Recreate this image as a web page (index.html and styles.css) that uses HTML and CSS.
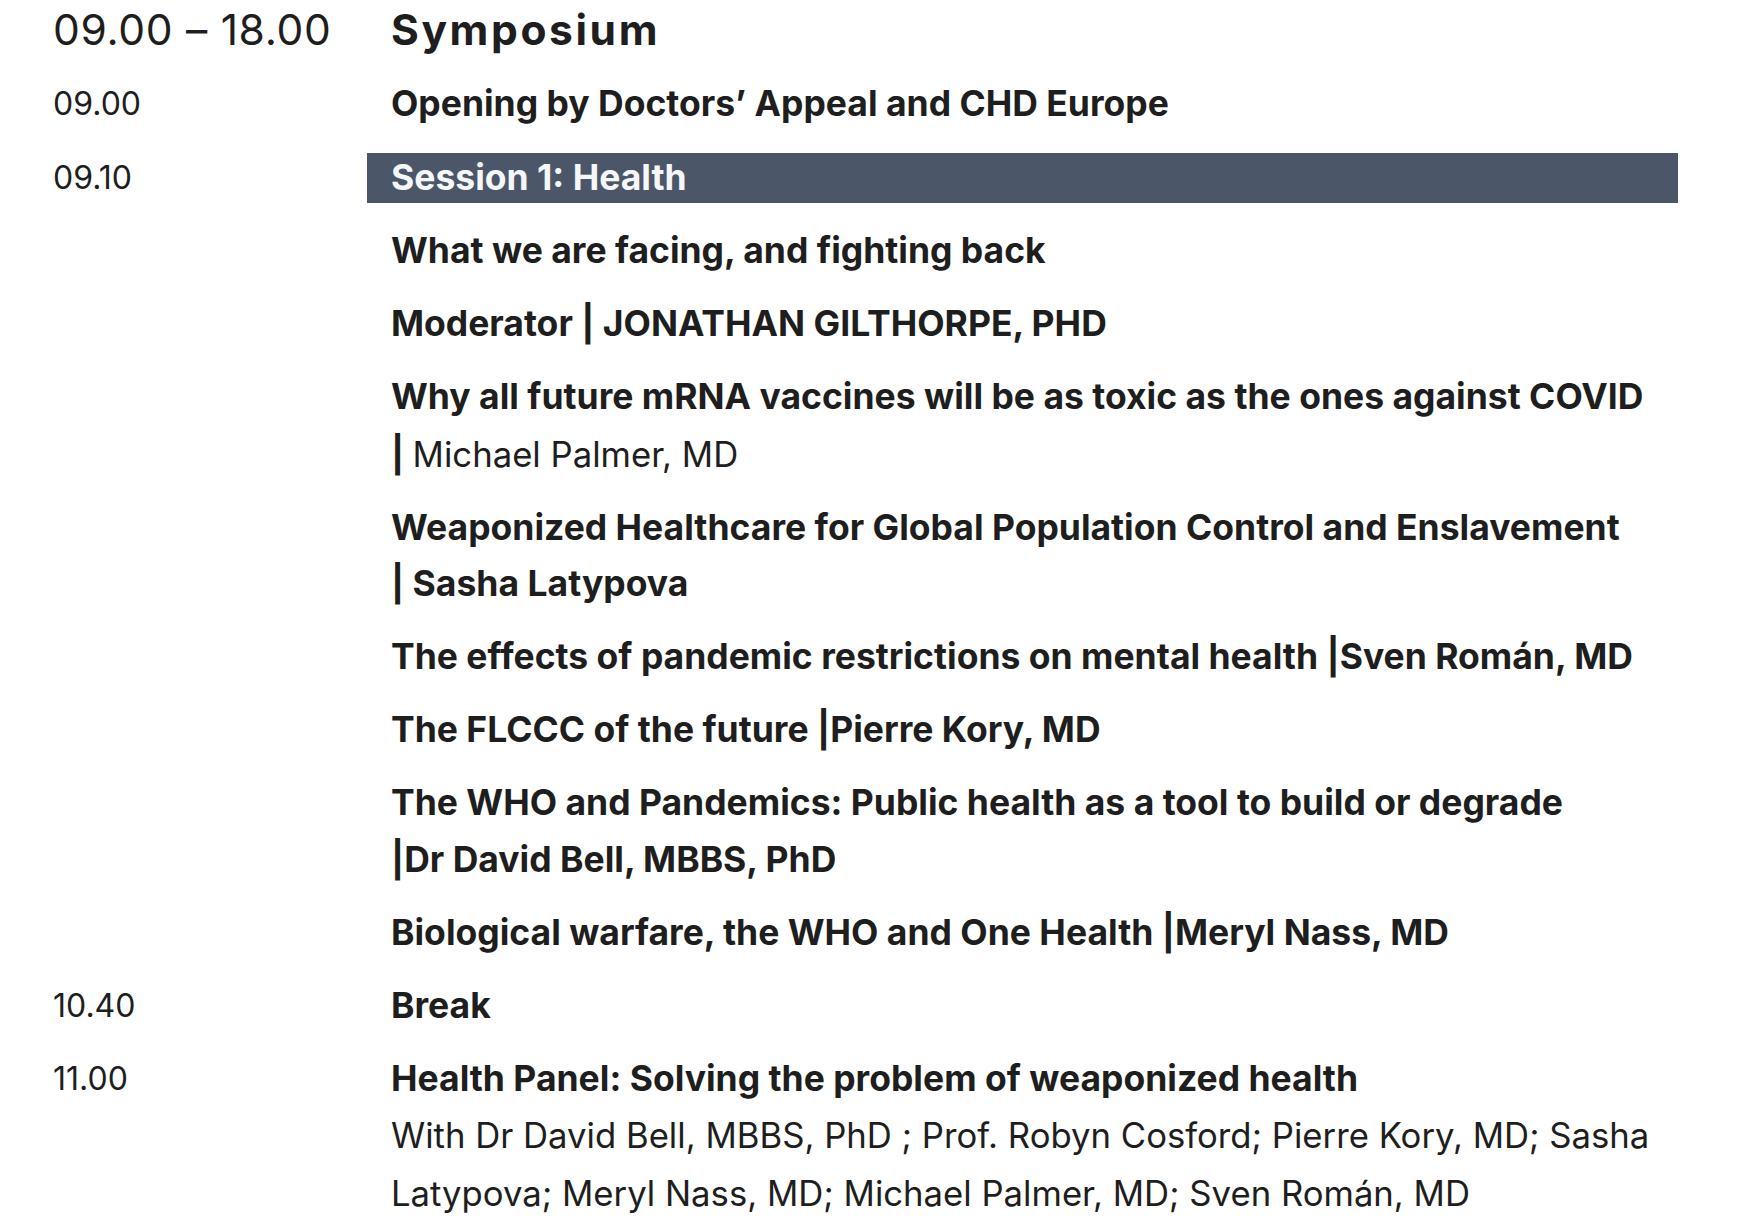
FILE: index.html
```html
<!DOCTYPE html>
<html lang="en">
<head>
<meta charset="utf-8">
<title>Symposium programme</title>
<link rel="stylesheet" href="styles.css">
</head>
<body>
<main class="schedule">
  <div class="time time-head">09.00 – 18.00</div>
  <div class="title">Symposium</div>

  <div class="time">09.00</div>
  <div class="item">Opening by Doctors’ Appeal and CHD Europe</div>

  <div class="time session-time">09.10</div>
  <div class="bar">Session 1: Health</div>

  <div class="time"></div>
  <div class="item">What we are facing, and fighting back</div>

  <div class="time"></div>
  <div class="item">Moderator | JONATHAN GILTHORPE, PHD</div>

  <div class="time"></div>
  <div class="item">Why all future mRNA vaccines will be as toxic as the ones against COVID<br>| <span class="reg">Michael Palmer, MD</span></div>

  <div class="time"></div>
  <div class="item">Weaponized Healthcare for Global Population Control and Enslavement<br>| Sasha Latypova</div>

  <div class="time"></div>
  <div class="item">The effects of pandemic restrictions on mental health |Sven Román, MD</div>

  <div class="time"></div>
  <div class="item">The FLCCC of the future |Pierre Kory, MD</div>

  <div class="time"></div>
  <div class="item">The WHO and Pandemics: Public health as a tool to build or degrade<br>|Dr David Bell, MBBS, PhD</div>

  <div class="time"></div>
  <div class="item">Biological warfare, the WHO and One Health |Meryl Nass, MD</div>

  <div class="time">10.40</div>
  <div class="item">Break</div>

  <div class="time">11.00</div>
  <div class="item">Health Panel: Solving the problem of weaponized health<br><span class="reg">With Dr David Bell, MBBS, PhD ; Prof. Robyn Cosford; Pierre Kory, MD; Sasha<br>Latypova; Meryl Nass, MD; Michael Palmer, MD; Sven Román, MD</span></div>
</main>
</body>
</html>
```

FILE: styles.css
```css
html, body {
  margin: 0;
  padding: 0;
  background: #ffffff;
}

body {
  font-family: "Inter", "Liberation Sans", sans-serif;
  color: #1e1e1e;
}

.schedule {
  display: grid;
  grid-template-columns: 314px 1311px;
  row-gap: 16.7px;
  padding: 1.5px 0 0 53px;
  font-size: 35.5px;
  line-height: 56.4px;
}

.time {
  font-size: 32px;
  font-weight: 400;
  color: #1e1e1e;
}

.time-head,
.title {
  font-size: 42.5px;
  line-height: 56px;
  margin-bottom: 2px;
}

.time-head {
  letter-spacing: 0.7px;
}

.title {
  font-weight: 700;
  letter-spacing: 2.6px;
  padding-left: 24px;
}

.item {
  font-weight: 700;
  padding-left: 24px;
}

.reg {
  font-weight: 400;
  font-size: 34.7px;
}

.bar {
  background: #4b5669;
  color: #f5f6f8;
  font-weight: 700;
  height: 50px;
  line-height: 50px;
  padding-left: 24px;
  margin: 4px 0 3px;
}

.session-time {
  line-height: 50px;
  margin: 4px 0 3px;
}
```
